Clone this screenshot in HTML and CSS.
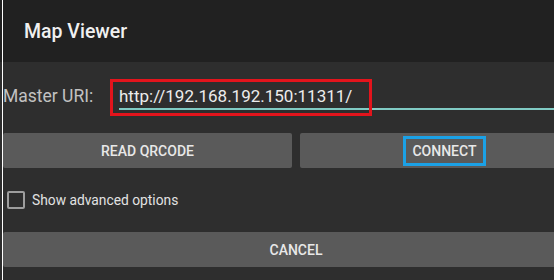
FILE: index.html
```html
<!DOCTYPE html>
<html>
<head>
    <link rel="stylesheet" href="styles.css">
</head>
<body>
    <div class="dialog">
        <div class="title">Map Viewer</div>
        <div class="content">
            <div class="uri-row">
                <div class="uri-label">Master URI:</div>
                <div class="uri-field">
                    http://192.168.192.150:11311/
                    <div class="red-mark"></div>
                </div>
            </div>
            <div class="buttons">
                <div class="btn">READ QRCODE</div>
                <div class="btn"><span class="blue-mark">CONNECT</span></div>
            </div>
            <div class="check-row">
                <div class="check-box"></div>
                <div class="check-label">Show advanced options</div>
            </div>
            <div class="btn cancel">CANCEL</div>
        </div>
    </div>
</body>
</html>
```

FILE: styles.css
```css
body {
    margin: 0;
    background-color: #2e2e2e;
    font-family: Roboto, "Noto Sans", sans-serif;
    overflow: hidden;
}

body::before {
    content: '';
    position: fixed;
    left: 2px;
    top: 0;
    bottom: 0;
    width: 1px;
    background-color: #ffffff;
}

.dialog {
    width: 592px;
}

.title {
    height: 62px;
    box-sizing: border-box;
    padding: 2px 0 0 24px;
    line-height: 60px;
    font-size: 19.5px;
    font-weight: 500;
    color: #f0f0f0;
    background-color: #212121;
}

.content {
    padding: 22px 0 13px 0;
}

.uri-row {
    display: flex;
    font-size: 17.5px;
    line-height: 24px;
}

.uri-label {
    margin-left: 3px;
    width: 116px;
    color: #c2c2c2;
}

.uri-field {
    flex: 1;
    position: relative;
    font-size: 17px;
    color: #ececec;
    border-bottom: 2px solid #80cbc4;
}

.red-mark {
    position: absolute;
    left: -9px;
    top: -5px;
    width: 262px;
    height: 37px;
    box-sizing: border-box;
    border: 3px solid #e3141c;
}

.buttons {
    display: flex;
    gap: 8px;
    margin: 23px 3px 0 3px;
}

.btn {
    flex: 1;
    height: 35px;
    display: flex;
    align-items: center;
    justify-content: center;
    background-color: #5a5a5a;
    border-radius: 2px;
    font-size: 14px;
    font-weight: 500;
    color: #e8e8e8;
}

.blue-mark {
    border: 3px solid #1ba1e6;
    padding: 4px 6px;
    line-height: 16px;
}

.check-row {
    display: flex;
    align-items: center;
    height: 18px;
    margin: 23px 0 0 7px;
}

.check-box {
    width: 18px;
    height: 18px;
    box-sizing: border-box;
    border: 2px solid #9e9e9e;
    border-radius: 2px;
}

.check-label {
    margin-left: 7px;
    font-size: 13.8px;
    color: #e2e2e2;
}

.cancel {
    margin: 23px 3px 0 3px;
}
```
